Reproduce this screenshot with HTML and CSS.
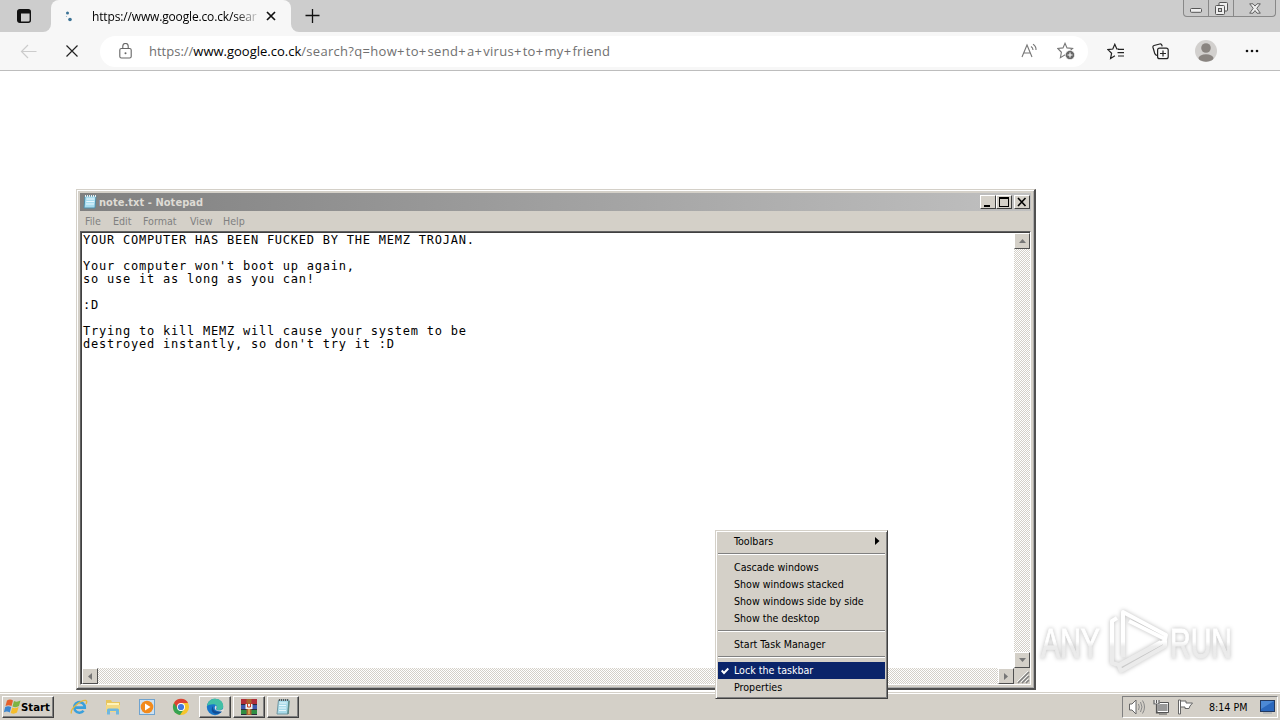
FILE: index.html
```html
<!DOCTYPE html>
<html lang="en">
<head>
    <meta charset="UTF-8">
    <meta name="viewport" content="width=device-width, initial-scale=1.0">
    <link rel="stylesheet" href="styles.css">
    <title>Desktop</title>
</head>
<body>
    <div class="desktop">
        <div class="browser">
            <div class="tab-strip">
                <div class="tab-actions">
                    <svg width="16" height="16" viewBox="0 0 16 16"><rect x="1.7" y="1.7" width="12.6" height="12.6" rx="2" fill="none" stroke="#111" stroke-width="1.4"/><path d="M2 2h12v3.5H2zM2 5h3v9H2z" fill="#111"/></svg>
                </div>
                <div class="tab">
                    <svg width="12" height="12" viewBox="0 0 12 12"><circle cx="3.5" cy="3" r="1.5" fill="#3b7396"/><circle cx="2.5" cy="6.5" r=".6" fill="#8fb4ca"/><circle cx="6" cy="9.5" r="1.8" fill="#3b7396"/></svg>
                    <span class="tab-title">https://www.google.co.ck/sear</span>
                    <svg class="tab-close" width="10" height="10" viewBox="0 0 10 10"><path d="M1 1l8 8M9 1l-8 8" stroke="#111" stroke-width="1.7"/></svg>
                </div>
                <svg class="new-tab" width="29" height="32" viewBox="0 0 29 32"><path d="M21.500 9v14M14.500 15.500h14" stroke="#111" stroke-width="1.3"/></svg>
                <div class="caption">
                    <span class="cap-btn cap-min"><svg width="12" height="5" viewBox="0 0 12 5"><rect x=".5" y=".5" width="11" height="3.8" rx="1" fill="#eee" stroke="#555"/></svg></span>
                    <span class="cap-btn"><svg width="13" height="13" viewBox="0 0 13 13"><g fill="#eee" stroke="#555"><rect x="4" y=".5" width="8.5" height="8.5" rx="1"/><rect x=".5" y="3.5" width="9" height="9" rx="1"/><rect x="3.5" y="6.5" width="3" height="3" fill="#ccc"/></g></svg></span>
                    <span class="cap-btn cap-close"><svg width="12" height="11" viewBox="0 0 12 11"><path d="M.7.8H4l2 2.3L8 .8h3.3L7.8 5.3l3.5 4.9H8L6 7.6l-2 2.6H.7l3.5-4.9z" fill="#eee" stroke="#555" stroke-width=".9"/></svg></span>
                </div>
            </div>
            <div class="toolbar">
                <svg width="17" height="15" viewBox="0 0 17 15"><path d="M16.5 7.5H1.5M8 1L1.5 7.5 8 14" fill="none" stroke="#ccc" stroke-width="1.2"/></svg>
                <svg class="stop" width="12" height="12" viewBox="0 0 12 12"><path d="M.5.5l11 11M11.5.5l-11 11" stroke="#222" stroke-width="1.2"/></svg>
                <div class="address">
                    <svg width="13" height="16" viewBox="0 0 13 16"><g fill="none" stroke="#666" stroke-width="1.1"><rect x=".8" y="5.5" width="11.4" height="9.5" rx="1.6"/><path d="M3.8 5.5V3.2a2.7 2.7 0 015.4 0v2.3"/></g><circle cx="6.5" cy="10.3" r="1" fill="#666"/></svg>
                    <span class="url">https://<b>www.google.co.ck</b><span class="path">/search?q=how<i>+</i>to<i>+</i>send<i>+</i>a<i>+</i>virus<i>+</i>to<i>+</i>my<i>+</i>friend</span></span>
                    <svg width="17" height="16" viewBox="0 0 17 16"><g fill="none" stroke="#777" stroke-width="1.1"><path d="M1 14L6 2l5 12M2.8 10h6.5M10 3.5q2 1.3 2 3.5M12 1.2q3.3 2 3 5.8"/></g></svg>
                    <svg class="fav" width="18" height="18" viewBox="0 0 18 18"><path d="M8 1.3l2 4.6 5.6.6-4.1 3.7.6 5L8 12.9l-4.6 2.8 1-5.4L.8 6.5 6 5.9z" fill="none" stroke="#777" stroke-width="1.1"/><circle cx="13" cy="13" r="4.6" fill="#666" stroke="#fff" stroke-width=".6"/><path d="M13 10.5v5M10.5 13h5" stroke="#fff" stroke-width="1.1"/></svg>
                </div>
                <svg class="favorites" width="18" height="17" viewBox="0 0 18 17"><path d="M12 6H9.8L7.8 1.3 5.8 6 .9 6.6l3.7 3.6-1 5.2 4.3-2.7M11 6.3h6M10.5 9.7h6.5M11 13h6" fill="none" stroke="#222" stroke-width="1.2"/></svg>
                <svg class="collections" width="17" height="17" viewBox="0 0 17 17"><g fill="none" stroke="#222" stroke-width="1.2"><path d="M5 12.5C3 12 3 11 2.6 10L1 4.5Q.6 3 2 2.5L7.8 1q1.5-.4 2 1l.4 1.4"/><rect x="5.6" y="5.1" width="10.6" height="10.6" rx="2"/><path d="M11 7.5v6M8 10.500h6"/></g></svg>
                <svg class="profile" width="22" height="22" viewBox="0 0 22 22"><circle cx="11" cy="11" r="11" fill="#d2d0ce"/><circle cx="11" cy="8" r="4.8" fill="#898480"/><ellipse cx="11" cy="18" rx="7.5" ry="3.7" fill="#898480"/></svg>
                <svg class="more" width="14" height="4" viewBox="0 0 14 4"><g fill="#111"><circle cx="2" cy="2" r="1.3"/><circle cx="7" cy="2" r="1.3"/><circle cx="12" cy="2" r="1.3"/></g></svg>
            </div>
        </div>

        <svg class="watermark" width="206" height="76" viewBox="0 0 206 76">
            <defs>
                <linearGradient id="fade" gradientUnits="userSpaceOnUse" x1="0" y1="8" x2="0" y2="70">
                    <stop offset=".48" stop-color="#fff"/>
                    <stop offset=".56" stop-color="#ebebeb"/>
                </linearGradient>
            </defs>
            <g class="mark">
                <path d="M86 53V8l43 23-1 4-36-18"/>
                <path d="M80 14l-5 3v42l7 2 42-23"/>
                <path d="M84 67l44-25v-5L82 62z"/>
            </g>
            <g class="letters">
                <text x="4" y="54" textLength="59" lengthAdjust="spacingAndGlyphs">ANY</text>
                <text x="133" y="54" textLength="62" lengthAdjust="spacingAndGlyphs">RUN</text>
            </g>
        </svg>

        <div class="notepad">
            <div class="title-bar">
                <svg width="16" height="16" viewBox="0 0 16 16"><path d="M3 2h11l-1 12H2z" fill="#a8dcef" stroke="#4e8da8"/><path d="M4.5 5h8M4.3 7.5h8M4 10h8" stroke="#e8f8ff"/><path d="M3 2h11" stroke="#eee" stroke-width="2" stroke-dasharray="1 1"/></svg>
                <span class="title">note.txt - Notepad</span>
                <span class="btn"><svg width="12" height="10" viewBox="0 0 12 10"><path d="M2 8h6v2H2z"/></svg></span>
                <span class="btn"><svg width="12" height="10" viewBox="0 0 12 10"><path d="M1 0h10v10H1zM2 2v7h8V2z" fill-rule="evenodd"/></svg></span>
                <span class="btn btn-close"><svg width="12" height="10" viewBox="0 0 12 10"><path d="M2 1l7.500 8M9.500 1L2 9" stroke="#000" stroke-width="1.6"/></svg></span>
            </div>
            <div class="menu-bar">
                <span class="m-file">File</span><span class="m-edit">Edit</span><span class="m-format">Format</span><span class="m-view">View</span><span>Help</span>
            </div>
            <div class="edit">
                <pre class="note">YOUR COMPUTER HAS BEEN FUCKED BY THE MEMZ TROJAN.

Your computer won't boot up again,
so use it as long as you can!

:D

Trying to kill MEMZ will cause your system to be
destroyed instantly, so don't try it :D</pre>
                <div class="scroll scroll-v">
                    <span class="arrow"><svg width="7" height="4" viewBox="0 0 7 4"><path d="M0 4l3.5-4L7 4z"/></svg></span>
                    <span class="arrow"><svg width="7" height="4" viewBox="0 0 7 4"><path d="M0 0h7L3.5 4z"/></svg></span>
                </div>
                <div class="scroll">
                    <span class="arrow"><svg width="4" height="7" viewBox="0 0 4 7"><path d="M4 0v7L0 3.5z"/></svg></span>
                    <span class="arrow"><svg width="4" height="7" viewBox="0 0 4 7"><path d="M0 0v7l4-3.5z"/></svg></span>
                </div>
                <div class="grip"><svg width="16" height="16" viewBox="0 0 16 16"><path d="M4 15L15 4M8 15l7-7M12 15l3-3" stroke="#808080" stroke-width="1.5"/><path d="M3 14L14 3M7 14l7-7M11 14l3-3" stroke="#fff" stroke-width=".8"/></svg></div>
            </div>
        </div>

        <div class="taskbar">
            <div class="start">
                <svg width="17" height="16" viewBox="0 0 17 16"><path d="M3 1.5q3-2 6 0L7.5 7q-3-1.5-6 0z" fill="#e5602b"/><path d="M10 2q3 1.5 6.5-.5L15 7q-3 2-6.5.5z" fill="#7db443"/><path d="M1.2 8q3-1.5 6 0L5.8 13.5q-3-2-6 0z" fill="#3c86cf"/><path d="M8.3 8.5q3 1.5 6.3-.5L13 13.5q-3 2-6.3.5z" fill="#f5bd2c"/></svg>
                <span>Start</span>
            </div>
            <div class="quick">
                <svg width="18" height="18" viewBox="0 0 18 18"><path d="M4.8 9.6h10a5.3 5.3 0 10-1.2 3.2" fill="none" stroke="#3aa0dc" stroke-width="2.6"/><path d="M1.5 15.5C-.5 11 11 1.5 16 2.5q1.5.7 0 3.5" fill="none" stroke="#e6b93c" stroke-width="1.3"/></svg>
                <svg width="18" height="18" viewBox="0 0 18 18"><path d="M2 2h5l1 2h8v10H2z" fill="#e8c55c"/><path d="M3 5h12v3H3z" fill="#fff3b8"/><path d="M2 7h14v7H2z" fill="#f3d983"/><path d="M3 16.5V12q0-1.5 1.5-1.5h9q1.5 0 1.500 1.5v4.500h-3v-3.500H6v3.500z" fill="#6fb7df"/></svg>
                <svg width="18" height="18" viewBox="0 0 18 18"><rect x="1.5" y="1.5" width="15" height="15" fill="#cde1f2" stroke="#6fa3cf"/><circle cx="9" cy="9" r="6.3" fill="#f28a1c"/><path d="M7 5.5v7L12.5 9z" fill="#fff"/></svg>
                <svg width="18" height="18" viewBox="0 0 18 18"><circle cx="9" cy="9" r="8" fill="#f6c52c"/><path d="M9 9L2 5a8 8 0 006 12l4-6z" fill="#36a352"/><path d="M2 5a8 8 0 0114 0H9L6 11z" fill="#dc4234"/><circle cx="9" cy="9" r="4" fill="#fff"/><circle cx="9" cy="9" r="3.1" fill="#4078df"/></svg>
            </div>
            <div class="tasks">
                <div class="task"><svg width="18" height="18" viewBox="0 0 18 18"><circle cx="9" cy="9" r="8.2" fill="#1876c9"/><path d="M1 8C2 3 5 .8 9 .8c5 0 8.5 3.5 8.2 7.5 0 3-2.2 4-4.7 4-2 0-2.5-.8-1.5-2 .8-2-1-4-4-4-2.5 0-4.5.8-6 1.7z" fill="#42bfa5"/><path d="M7 8c-1 4 3 7 9 5l-1 1.5C9 18 3 14 7 8z" fill="#124d94"/><path d="M9.5 7.5c2.5 1 0 3 1 4.2 1.2 1.3 4 1 6.2-.5l1.300 0-.5 2c-5 1-11-1-8-5.700z" fill="#e4e0da"/></svg></div>
                <div class="task"><svg width="18" height="18" viewBox="0 0 18 18"><path d="M1 1h16v5H1z" fill="#b12d38"/><path d="M1 6h16v5H1z" fill="#3e59ad"/><path d="M1 11h16v5H1z" fill="#2f8e43"/><path d="M1 6.5h16M1 11.5h16M1 16.5h16" stroke="#292b3b"/><path d="M6.5 1h5v16h-5z" fill="#a9642f"/><path d="M5.5 6h7v5h-7z" fill="#eee"/><path d="M7.5 5v4h3V5" fill="none" stroke="#c43b24"/><path d="M9 11v5" stroke="#e0b65e" stroke-width="1.5"/></svg></div>
                <div class="task"><svg width="18" height="18" viewBox="0 0 18 18"><path d="M4.5 2H15l-1 14H3z" fill="#a9dbe9" stroke="#7196a1"/><path d="M5.5 5h7M5 7.5h7M5 10h7M5 12.5h7" stroke="#e7f8fc"/><path d="M5 2h10" stroke="#555" stroke-width="2" stroke-dasharray="1 1"/><path d="M15 3l-1 13" stroke="#5c8b88" stroke-width="1.5"/></svg></div>
            </div>
            <div class="tray">
                <svg width="18" height="16" viewBox="0 0 18 16"><path d="M1.5 5H4l4-4v14l-4-4H1.5z" fill="#fff" stroke="#666"/><path d="M10.5 5q1.5 3 0 6M12.5 3q3 5 0 10M14.5 1.5q4 6.5 0 13" fill="none" stroke="#888"/></svg>
                <svg class="tray-net" width="16" height="16" viewBox="0 0 16 16"><rect x="4.5" y="4.5" width="10.5" height="8" fill="#999" stroke="#fff"/><path d="M4 3.5h11.5v10H4zM6 15h8" fill="none" stroke="#555"/><path d="M.5 1h6v5h-6z" fill="#fff"/><path d="M1 1v4h5V1M3.5 1v3M3.5 5v9h3" fill="none" stroke="#555" stroke-width="1.2"/></svg>
                <svg class="tray-flag" width="17" height="16" viewBox="0 0 17 16"><path d="M1.5 1h2v14h-2zM3.5 2H9v2h6.5L13 7l-1 2.5H8V8H3.5z" fill="#fff" stroke="#666"/></svg>
                <span class="clock">8:14 PM</span>
                <svg width="16" height="14" viewBox="0 0 16 14"><rect x=".5" y=".5" width="14" height="11" fill="#2b68bd" stroke="#23395f"/><path d="M1 1h13L1 9z" fill="#4c89d5"/><path d="M3 13h9" stroke="#9ba4ae"/></svg>
            </div>
        </div>

        <div class="context-menu">
            <div class="item">Toolbars<svg width="5" height="8" viewBox="0 0 5 8"><path d="M0 0v8l4.5-4z"/></svg></div>
            <hr>
            <div class="item">Cascade windows</div>
            <div class="item">Show windows stacked</div>
            <div class="item">Show windows side by side</div>
            <div class="item">Show the desktop</div>
            <hr>
            <div class="item">Start Task Manager</div>
            <hr>
            <div class="item selected"><svg class="check" width="8" height="8" viewBox="0 0 8 8"><path d="M.7 3.5L3 6l4.300-4.500" fill="none" stroke="#fff" stroke-width="2"/></svg>Lock the taskbar</div>
            <div class="item">Properties</div>
        </div>
    </div>
</body>
</html>
```
FILE: styles.css
```css
* {
    box-sizing: border-box;
}

body {
    margin: 0;
    background: #fff;
    font-family: "DejaVu Sans Condensed", "DejaVu Sans", sans-serif;
    font-stretch: condensed;
    font-size: 10.6px;
    color: #000;
}

svg {
    display: block;
    flex: none;
}

.desktop {
    position: relative;
    width: 1280px;
    height: 720px;
    overflow: hidden;
    display: flex;
    flex-direction: column;
}

/* browser */
.browser {
    flex: 1;
    font-family: "Open Sans", "Noto Sans", sans-serif;
    font-stretch: normal;
}

.tab-strip {
    height: 32px;
    background: linear-gradient(to right, #cdcdcd 43px, #f7f7f7 43px, #f7f7f7 299px, #cdcdcd 299px);
    display: flex;
}

.tab-actions {
    width: 51px;
    padding: 8px 0 0 16px;
    background: #cdcdcd;
    border-bottom-right-radius: 8px;
}

.tab {
    width: 240px;
    background: #f7f7f7;
    box-shadow: -8px -24px #cdcdcd, 8px -24px #cdcdcd;
    border-radius: 8px 8px 0 0;
    display: flex;
    align-items: center;
    padding-left: 13px;
}

.tab-title {
    width: 170px;
    margin-left: 16px;
    white-space: nowrap;
    font-size: 12px;
    letter-spacing: -0.15px;
    -webkit-mask-image: linear-gradient(to right, #000 142px, transparent 170px);
    mask-image: linear-gradient(to right, #000 142px, transparent 170px);
}

.tab-close {
    margin-left: 4px;
}

.new-tab {
    background: #cdcdcd;
    border-bottom-left-radius: 8px;
}

.caption {
    display: flex;
    width: 93px;
    height: 17px;
    margin: 0 4px 0 auto;
    border: 1px solid #888;
    border-top: 0;
    border-radius: 0 0 4px 4px;
    background: #c9c9c9;
}

.cap-btn {
    display: flex;
    justify-content: center;
    align-items: center;
    width: 25px;
    border-right: 1px solid #888;
}

.cap-min {
    padding-top: 5px;
}

.cap-close {
    flex: 1;
    border-right: 0;
}

.toolbar {
    height: 39px;
    background: #f7f7f7;
    border-bottom: 1px solid #bdbdbd;
    display: flex;
    align-items: center;
    padding-left: 20px;
}

.stop {
    margin-left: 29px;
}

.address {
    display: flex;
    align-items: center;
    width: 988px;
    height: 31px;
    margin-left: 22px;
    padding-left: 19px;
    background: #fff;
    border-radius: 16px;
}

.url {
    width: 872px;
    margin-left: 17px;
    font-size: 13px;
    color: #707070;
    white-space: nowrap;
}

.url b {
    font-weight: normal;
    color: #000;
}

.path {
    letter-spacing: 0.3px;
}

.path i {
    font-style: normal;
    margin-right: 1px;
}

.fav {
    margin-left: 19px;
}

.favorites {
    margin-left: 19px;
}

.collections {
    margin-left: 27px;
}

.profile {
    margin-left: 26px;
}

.more {
    margin-left: 28px;
}

.watermark {
    position: absolute;
    left: 1037px;
    top: 604px;
    filter: drop-shadow(0 0 2px #bbb);
}

.letters {
    font: 42px "Liberation Sans Narrow", "Liberation Sans", sans-serif;
    fill: url(#fade);
    stroke: url(#fade);
    stroke-width: 1px;
}

.mark {
    fill: none;
    stroke: url(#fade);
    stroke-width: 4;
    stroke-linejoin: round;
}

/* notepad window */
.notepad {
    position: absolute;
    left: 76px;
    top: 189px;
    width: 960px;
    height: 501px;
    background: #d4d0c8;
    border: 1px solid #d4d0c8;
    border-right: 2px solid #505050;
    border-bottom: 2px solid #505050;
    box-shadow: inset 1px 1px #fff, inset -1px -1px #aaa;
    padding: 3px;
    display: flex;
    flex-direction: column;
}

.title-bar {
    height: 18px;
    display: flex;
    align-items: center;
    background: linear-gradient(to right, #808080, #c0c0c0);
    padding: 0 1px 0 2px;
}

.title {
    flex: 1;
    margin-left: 1px;
    color: #dedbd4;
    font-weight: bold;
    font-size: 11px;
    letter-spacing: 0.05px;
}

.btn {
    width: 16px;
    height: 14px;
    padding: 1px;
    background: #d4d0c8;
    border: 1px solid;
    border-color: #fff #404040 #404040 #fff;
}

.btn-close {
    margin-left: 2px;
}

.menu-bar {
    display: flex;
    height: 20px;
    line-height: 21px;
    padding-left: 5px;
    color: #808080;
}

.m-file {
    width: 28px;
}

.m-edit {
    width: 30px;
}

.m-format {
    width: 47px;
}

.m-view {
    width: 33px;
}

.edit {
    flex: 1;
    display: grid;
    grid-template-columns: 1fr 16px;
    grid-template-rows: 1fr 16px;
    background: #fff;
    border: 1px solid;
    border-color: #606060 #fff #fff #606060;
    box-shadow: inset 1px 1px #404040;
    padding: 1px 0 0 1px;
}

.note {
    margin: 0;
    padding: 1px 0 0 1px;
    font: 12px/13px "DejaVu Sans Mono", monospace;
    letter-spacing: 0.77px;
}

.scroll {
    display: flex;
    justify-content: space-between;
    background: repeating-conic-gradient(#fff 0 25%, #d4d0c8 0 50%) 0 0 / 2px 2px;
}

.scroll-v {
    flex-direction: column;
}

.arrow {
    width: 16px;
    height: 16px;
    display: flex;
    align-items: center;
    justify-content: center;
    background: #d4d0c8;
    border: 1px solid;
    border-color: #fff #505050 #505050 #fff;
    fill: #777;
}

.grip {
    background: #d4d0c8;
}

/* taskbar */
.taskbar {
    height: 28px;
    background: #d4d0c8;
    border-top: 1px solid #d4d0c8;
    box-shadow: inset 0 1px #fff;
    display: flex;
    align-items: center;
    padding: 2px 2px 1px;
}

.start {
    width: 52px;
    height: 22px;
    display: flex;
    align-items: center;
    padding-left: 1px;
    border: 1px solid;
    border-color: #fff #404040 #404040 #fff;
    box-shadow: inset -1px -1px #808080;
    font-weight: bold;
    font-size: 11.3px;
}

.quick {
    display: flex;
    gap: 16px;
    margin-left: 16px;
}

.tasks {
    display: flex;
    gap: 2px;
    margin-left: 9px;
}

.task {
    width: 32px;
    height: 22px;
    display: flex;
    align-items: center;
    justify-content: center;
    border: 1px solid;
    border-color: #fff #404040 #404040 #fff;
    box-shadow: inset -1px -1px #808080;
}

.tray {
    display: flex;
    align-items: center;
    width: 156px;
    height: 22px;
    margin-left: auto;
    padding-left: 5px;
    border: 1px solid;
    border-color: #808080 #fff #fff #808080;
}

.tray-net {
    margin-left: 7px;
}

.tray-flag {
    margin-left: 8px;
}

.clock {
    width: 42px;
    margin: 0 9px 0 15px;
    white-space: nowrap;
}

/* taskbar context menu */
.context-menu {
    position: absolute;
    left: 715px;
    top: 530px;
    width: 173px;
    height: 169px;
    padding: 2px 1px 1px;
    background: #d4d0c8;
    border: 1px solid;
    border-color: #d4d0c8 #404040 #404040 #d4d0c8;
    box-shadow: inset 1px 1px #fff, inset -1px -1px #808080;
}

.context-menu hr {
    height: 2px;
    margin: 3px 1px 4px;
    border: 0;
    border-top: 1px solid #808080;
    border-bottom: 1px solid #fff;
}

.item {
    position: relative;
    display: flex;
    align-items: center;
    justify-content: space-between;
    height: 17px;
    padding: 0 5px 1px 16px;
    margin: 0 1px;
}

.selected {
    background: #0a246a;
    color: #fff;
}

.check {
    position: absolute;
    left: 3px;
    top: 5px;
}
```
